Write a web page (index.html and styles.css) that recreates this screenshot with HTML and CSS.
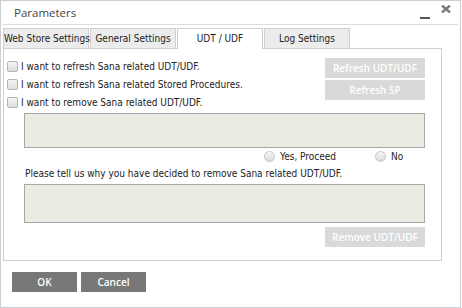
FILE: index.html
```html
<!DOCTYPE html>
<html lang="en">
<head>
  <meta charset="UTF-8" />
  <title>Parameters</title>
  <link rel="stylesheet" href="styles.css">
</head>
<body>
  <div class="window">
    <div class="title-bar">
      <span class="title">Parameters</span>
      <span class="win-min"></span>
      <svg class="win-close" width="10" height="8" viewBox="0 0 10 8">
        <path d="M1 0.5 L9 7.5 M9 0.5 L1 7.5" stroke="#7a7a7a" stroke-width="2.4" />
      </svg>
    </div>

    <div class="tabs">
      <div class="tab">Web Store Settings</div>
      <div class="tab">General Settings</div>
      <div class="tab active">UDT / UDF</div>
      <div class="tab">Log Settings</div>
    </div>

    <div class="panel">
      <div class="top-row">
        <div class="checks">
          <label class="check"><input type="checkbox"> I want to refresh Sana related UDT/UDF.</label>
          <label class="check"><input type="checkbox"> I want to refresh Sana related Stored Procedures.</label>
          <label class="check"><input type="checkbox"> I want to remove Sana related UDT/UDF.</label>
        </div>
        <div class="side-buttons">
          <button class="btn-disabled">Refresh UDT/UDF</button>
          <button class="btn-disabled">Refresh SP</button>
        </div>
      </div>

      <textarea class="box box-small" disabled></textarea>

      <div class="radios">
        <label class="radio radio-yes"><input type="radio" name="proceed"> Yes, Proceed</label>
        <label class="radio"><input type="radio" name="proceed"> No</label>
      </div>

      <div class="reason">Please tell us why you have decided to remove Sana related UDT/UDF.</div>
      <textarea class="box box-large" disabled></textarea>

      <div class="remove-row">
        <button class="btn-disabled">Remove UDT/UDF</button>
      </div>
    </div>

    <div class="footer">
      <button class="btn-dark">OK</button>
      <button class="btn-dark">Cancel</button>
    </div>
  </div>
</body>
</html>
```

FILE: styles.css
```css
body {
  margin: 0;
  background: #fff;
  font-family: "DejaVu Sans Condensed", "DejaVu Sans", sans-serif;
  font-size: 10px;
  color: #222;
}

.window {
  width: 459px;
  height: 306px;
  border: 1px solid #c9cfd3;
  background: #fff;
  display: flex;
  flex-direction: column;
}

.title-bar {
  height: 23px;
  margin: 0 2px;
  border-bottom: 1px solid #dcdcdc;
  display: flex;
  align-items: center;
}

.title {
  flex: 1;
  padding-left: 11px;
  font-family: "Open Sans", sans-serif;
  font-size: 11.5px;
  color: #444;
}

.win-min {
  width: 10px;
  height: 2px;
  background: #555;
  margin-top: 10px;
  margin-right: 11px;
}

.win-close {
  margin-right: 7px;
  margin-top: -7px;
}

.tabs {
  display: flex;
  margin: 3px 0 0 2px;
  height: 20px;
}

.tab {
  width: 84px;
  height: 19px;
  margin-right: 1px;
  border: 1px solid #cfcfcf;
  border-bottom: none;
  background: #ececec;
  text-align: center;
  line-height: 19px;
  white-space: nowrap;
}

.tab.active {
  background: #fff;
  position: relative;
  z-index: 1;
  height: 20px;
}

.panel {
  width: 437px;
  height: 211px;
  margin-left: 2px;
  border: 1px solid #cfcfcf;
  display: flex;
  flex-direction: column;
}

.top-row {
  display: flex;
  justify-content: space-between;
}

.checks {
  padding: 8px 0 0 3px;
}

.check {
  display: flex;
  align-items: center;
  height: 18px;
  gap: 3px;
}

input[type="checkbox"] {
  appearance: none;
  margin: 0;
  width: 11px;
  height: 11px;
  border: 1px solid #b5b5b5;
  border-radius: 2px;
  background: linear-gradient(#f4f4f4, #dedede);
}

.side-buttons {
  display: flex;
  flex-direction: column;
  gap: 2px;
  padding: 9px 16px 0 0;
}

button {
  font-family: "Open Sans", sans-serif;
  border: none;
  cursor: pointer;
  padding: 0;
}

.btn-disabled {
  width: 100px;
  height: 20px;
  background: #d9d9d9;
  color: #fff;
  font-size: 10px;
  font-weight: 600;
}

.box {
  display: block;
  margin: 0 0 0 20px;
  width: 401px;
  border: 1px solid #a8a8a8;
  background: #ebeae3;
  resize: none;
  box-sizing: border-box;
  padding: 0;
}

.box-small {
  height: 35px;
  margin-top: 2px;
}

.box-large {
  height: 39px;
}

.radios {
  display: flex;
  margin: 1px 0 0 260px;
  height: 14px;
  align-items: center;
}

.radio {
  display: flex;
  align-items: center;
  gap: 5px;
}

.radio-yes {
  width: 111px;
}

input[type="radio"] {
  appearance: none;
  margin: 0;
  width: 11px;
  height: 11px;
  border: 1px solid #c4c4c4;
  border-radius: 50%;
  background: linear-gradient(#f6f6f6, #dcdcdc);
}

.reason {
  margin: 4px 0 3px 21px;
  line-height: 14px;
}

.remove-row {
  display: flex;
  justify-content: flex-end;
  padding: 4px 16px 0 0;
}

.footer {
  display: flex;
  gap: 4px;
  padding: 11px 0 0 11px;
}

.btn-dark {
  width: 65px;
  height: 20px;
  background: #787878;
  color: #fff;
  font-size: 10px;
  font-weight: 600;
}
```
